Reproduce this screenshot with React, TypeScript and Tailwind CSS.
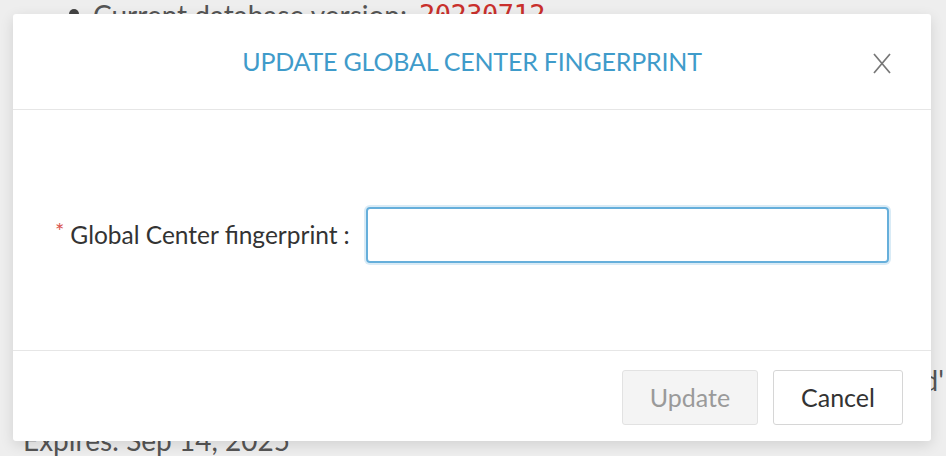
export default function App() {
  return (
    <div className="relative w-[946px] h-[456px] overflow-hidden bg-[#eeeeee] font-['Lato','Noto_Sans',sans-serif] text-[#333]">
      {/* page behind the modal */}
      <div className="flex flex-col text-[28px] leading-[32px] text-[#555]">
        <div className="h-[32px] flex items-center -mt-[1px] pl-[69px]">
          <span className="w-[10px] h-[10px] rounded-full bg-[#444] mr-[14px] -mt-[2px]" />
          <span>Current database version:</span>
          <span className="ml-[12px] text-[#c9302c] font-['DejaVu_Sans_Mono',monospace] text-[27px] tracking-[-0.5px]">20230712</span>
        </div>
        <div className="mt-[333px] flex justify-end pr-[2px]">
          <span>d'</span>
        </div>
        <div className="mt-[28px] pl-[23px]">Expires: Sep 14, 2025</div>
      </div>

      {/* modal */}
      <div className="absolute left-[13px] top-[14px] w-[918px] h-[427px] flex flex-col bg-white rounded-[3px] shadow-[0_4px_14px_rgba(0,0,0,0.12)]">
        <div className="relative h-[96px] flex items-center justify-center border-b border-[#e6e6e6]">
          <h2 className="text-[25px] tracking-[-0.2px] text-[#3f9bca] uppercase">Update Global Center Fingerprint</h2>
          <button className="absolute right-[40px] top-[39px] w-[18px] h-[21px] text-[#777]">
            <svg viewBox="0 0 18 21" width="18" height="21" fill="none" stroke="currentColor" strokeWidth="1.7">
              <path d="M1 1 L17 20 M17 1 L1 20" />
            </svg>
          </button>
        </div>

        <div className="flex-1 flex items-start pt-[97px] pl-[42px] pr-[42px]">
          <label className="h-[56px] flex items-center text-[24.5px] text-[#333] whitespace-nowrap">
            <span className="text-[#d9534f] text-[22px] mr-[6px] -mt-[10px]">*</span>
            Global Center fingerprint
            <span className="ml-[6px]">:</span>
          </label>
          <input className="ml-[16px] flex-1 h-[56px] rounded-[4px] border-2 border-[#66afdb] outline-none shadow-[0_0_0_2px_rgba(102,175,219,0.25)]" />
        </div>

        <div className="h-[91px] flex items-start justify-end gap-[15px] pt-[19px] pr-[28px] border-t border-[#e6e6e6]">
          <button className="w-[136px] h-[55px] rounded-[3px] border border-[#e2e2e2] bg-[#f4f4f4] text-[25px] text-[#9a9a9a]">Update</button>
          <button className="w-[130px] h-[55px] rounded-[3px] border border-[#d6d6d6] bg-white text-[25px] text-[#333]">Cancel</button>
        </div>
      </div>
    </div>
  );
}
